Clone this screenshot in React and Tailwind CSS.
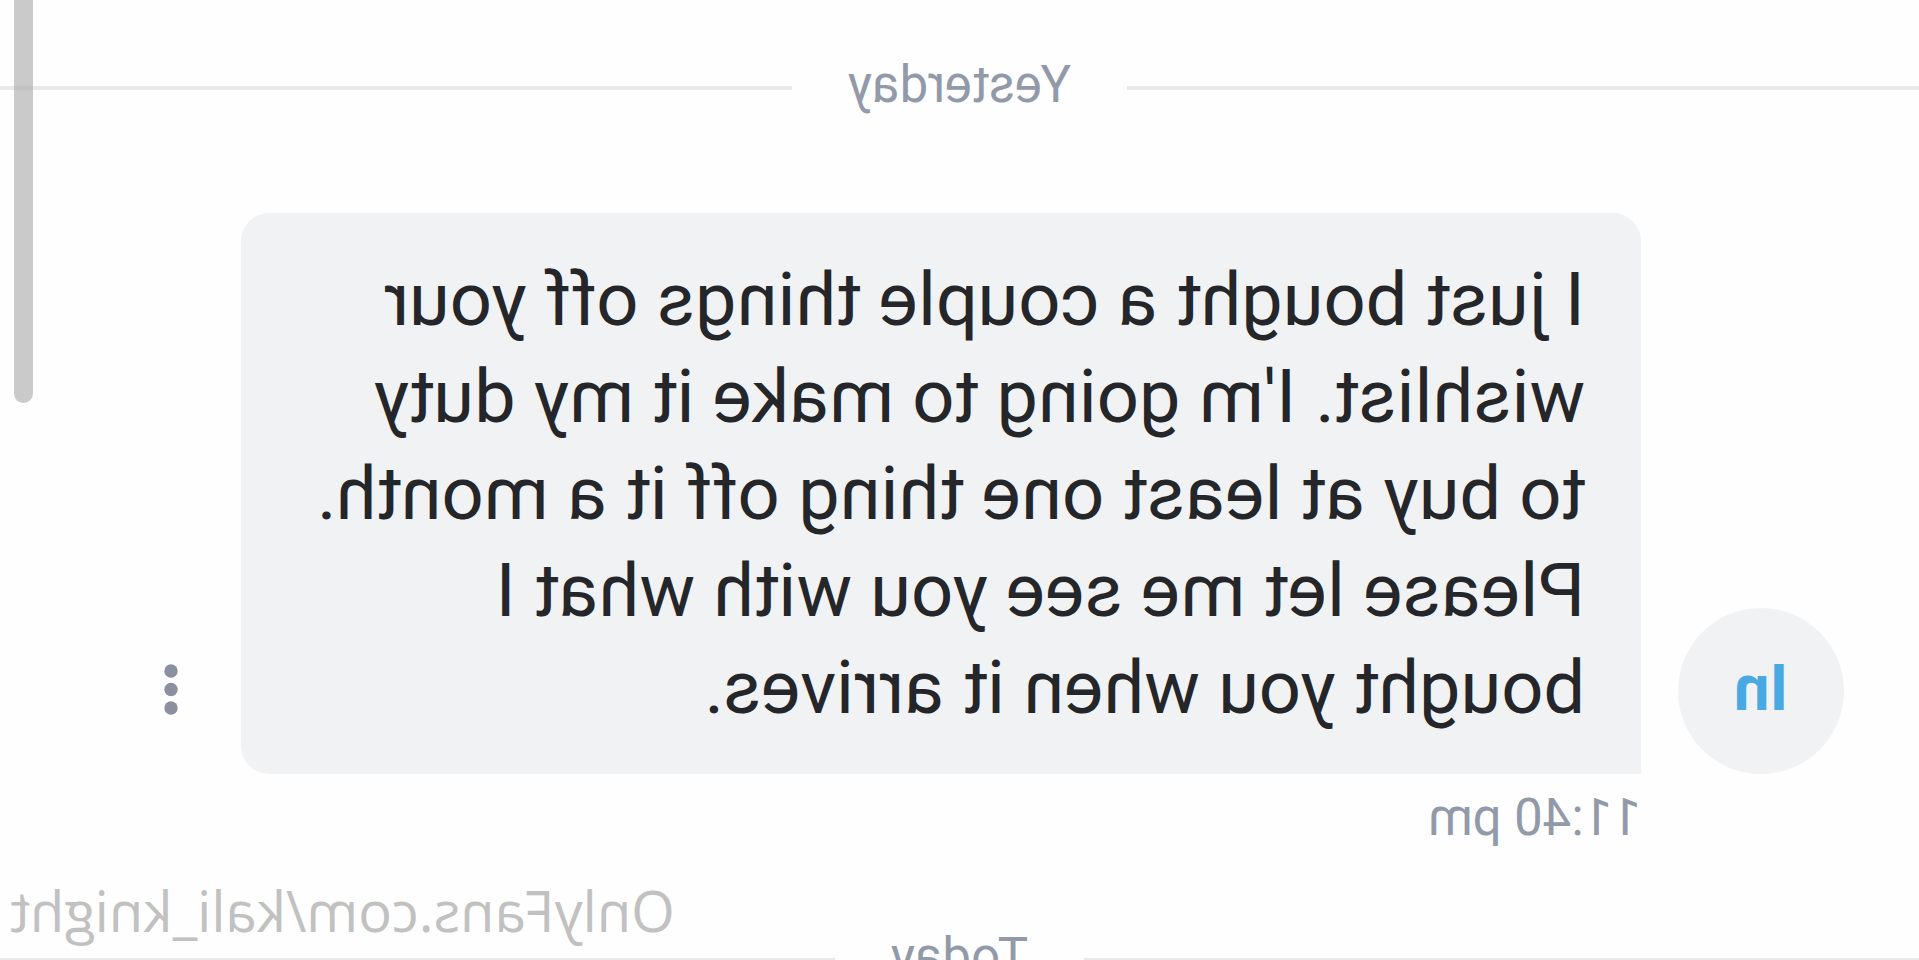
import React from "react";

const message = {
  initials: "In",
  text: "I just bought a couple things off your wishlist. I'm going to make it my duty to buy at least one thing off it a month. Please let me see you with what I bought you when it arrives.",
  time: "11:40 pm",
};

const DayDivider = ({ label }) => (
  <div className="flex items-center gap-14">
    <div className="mt-1.5 h-1 flex-1 bg-[#e8e8e9]" />
    <h2 className="text-[51px] leading-[60px] text-[#929aaa]">{label}</h2>
    <div className="mt-1.5 h-1 flex-1 bg-[#e8e8e9]" />
  </div>
);

const Message = ({ initials, text, time }) => (
  <article className="pl-[75px] pr-[101px]">
    <div className="flex items-end">
      <div className="mr-[37px] flex size-[166px] shrink-0 items-center justify-center rounded-full bg-[#f1f2f4] pb-1 text-[64px] font-bold text-[#49aae3]">
        {initials}
      </div>
      <p className="min-w-0 flex-1 rounded-[28px] rounded-bl-none bg-[#f1f2f4] px-14 py-[38px] text-[74px] leading-[97px] text-[#242629]">
        {text}
      </p>
      <button type="button" aria-label="Message options" className="flex h-[166px] w-[140px] shrink-0 items-center justify-center text-[#8b90a1]">
        <svg viewBox="0 0 14 56" className="h-14 w-3.5" fill="currentColor">
          <circle cx="7" cy="8" r="6.7" />
          <circle cx="7" cy="26.5" r="6.7" />
          <circle cx="7" cy="45" r="6.7" />
        </svg>
      </button>
    </div>
    <time className="mt-3.5 ml-[203px] block text-[51px] leading-[60px] text-[#929aaa]">{time}</time>
  </article>
);

const App = () => {
  return (
    // The whole conversation is flipped left to right
    <main className="relative h-screen -scale-x-100 overflow-hidden bg-[#fefefe] pt-[55px] font-[Roboto,sans-serif]">
      <DayDivider label="Yesterday" />
      <div className="mt-[98px] mb-[79px]">
        <Message {...message} />
      </div>
      <DayDivider label="Today" />

      {/* Scroll thumb */}
      <div className="absolute top-0 right-3.5 h-[403px] w-[19px] rounded-b-full bg-[#b4b4b4]/70" />

      {/* Watermark */}
      <p className="absolute right-2.5 bottom-3.5 font-['Open_Sans',sans-serif] text-[56px] leading-[72px] text-[#c1c1c1]">
        OnlyFans.com/kali_knight
      </p>
    </main>
  );
};

export default App;
